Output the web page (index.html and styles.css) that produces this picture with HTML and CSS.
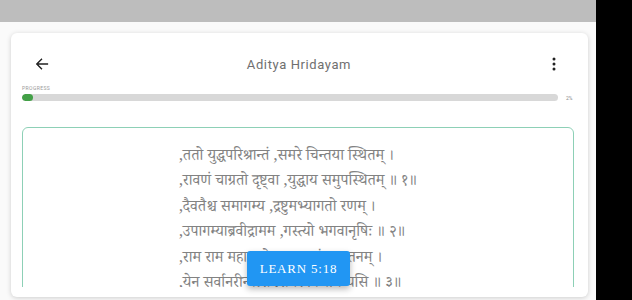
FILE: index.html
```html
<!DOCTYPE html>
<html lang="en">
<head>
    <meta charset="UTF-8">
    <meta name="viewport" content="width=device-width, initial-scale=1.0">
    <title>Aditya Hridayam</title>
    <link rel="stylesheet" href="styles.css">
</head>
<body>
    <div class="screen">
        <div class="main">
            <div class="topbar"></div>

            <div class="card">
                <div class="header">
                    <button class="icon-btn" aria-label="Back">
                        <svg width="14" height="14" viewBox="0 0 16 16">
                            <path d="M15 8H2M8 2L2 8l6 6" fill="none" stroke="#222" stroke-width="1.6"/>
                        </svg>
                    </button>
                    <div class="title">Aditya Hridayam</div>
                    <button class="icon-btn" aria-label="More">
                        <svg width="4" height="14" viewBox="0 0 4 14">
                            <circle cx="2" cy="2" r="1.5" fill="#222"/>
                            <circle cx="2" cy="7" r="1.5" fill="#222"/>
                            <circle cx="2" cy="12" r="1.5" fill="#222"/>
                        </svg>
                    </button>
                </div>

                <div class="progress-label">PROGRESS</div>
                <div class="progress-row">
                    <div class="progress-track">
                        <div class="progress-fill" style="width: 2%"></div>
                    </div>
                    <span class="progress-value">2%</span>
                </div>

                <div class="verse-scroll">
                    <div class="verse-box">
                        <div class="verses">
                            <p>,ततो युद्धपरिश्रान्तं ,समरे चिन्तया स्थितम् ।</p>
                            <p>,रावणं चाग्रतो दृष्ट्वा ,युद्धाय समुपस्थितम् ॥ १॥</p>
                            <p>,दैवतैश्च समागम्य ,द्रष्टुमभ्यागतो रणम् ।</p>
                            <p>,उपागम्याब्रवीद्रामम ,गस्त्यो भगवानृषिः ॥ २॥</p>
                            <p>,राम राम महाबाहो ,शृणु गुह्यं सनातनम् ।</p>
                            <p>,येन सर्वानरीन्वत्स ,समरे विजयिष्यसि ॥ ३॥</p>
                        </div>
                    </div>
                </div>

                <button class="learn-btn">LEARN 5:18</button>
            </div>
        </div>
        <div class="side"></div>
    </div>
</body>
</html>
```

FILE: styles.css
```css
body {
    margin: 0;
    padding: 0;
    font-family: Roboto, sans-serif;
    background-color: #000;
}
.screen {
    display: flex;
    height: 300px;
    overflow: hidden;
}
.main {
    width: 596px;
    background-color: #fafafa;
    display: flex;
    flex-direction: column;
}
.side {
    flex: 1;
    background-color: #000;
}
.topbar {
    height: 22px;
    background-color: #bdbdbd;
    flex-shrink: 0;
}
.card {
    position: relative;
    margin: 11px 8px 0 11px;
    height: 264px;
    background: white;
    border-radius: 6px;
    box-shadow: 0 1px 5px rgba(0, 0, 0, 0.18);
    padding: 11px 14px 0 11px;
    box-sizing: border-box;
    overflow: hidden;
}
.header {
    display: flex;
    align-items: center;
    justify-content: space-between;
    height: 40px;
    padding: 0 12px 0 12px;
}
.icon-btn {
    background: none;
    border: none;
    padding: 0;
    width: 16px;
    height: 16px;
    display: flex;
    align-items: center;
    justify-content: center;
}
.title {
    font-size: 13px;
    letter-spacing: 0.6px;
    color: #6f6f6f;
    margin-left: 2px;
}
.progress-label {
    font-size: 5px;
    letter-spacing: 0.4px;
    color: #9a9a9a;
    margin-top: 0;
    height: 8px;
    line-height: 8px;
}
.progress-row {
    display: flex;
    align-items: center;
    margin-top: 2px;
}
.progress-track {
    width: 536px;
    height: 7px;
    background-color: #d8d8d8;
    border-radius: 4px;
    overflow: hidden;
}
.progress-fill {
    height: 100%;
    background-color: #43a047;
    border-radius: 4px;
}
.progress-value {
    font-size: 5px;
    color: #8a8a8a;
    margin-left: 8px;
}
.verse-scroll {
    margin-top: 26px;
    height: 160px;
    overflow: hidden;
}
.verse-box {
    border: 1px solid #8dd0b6;
    border-radius: 6px;
    padding: 18px 0 20px;
    text-align: center;
}
.verses {
    display: inline-block;
    text-align: left;
    font-family: "Noto Serif Devanagari", "Noto Sans Devanagari", "Liberation Serif", serif;
    font-size: 15.5px;
    color: #828282;
    margin-left: 0;
}
.verses p {
    margin: 0;
    line-height: 25.4px;
}
.learn-btn {
    position: absolute;
    left: 236px;
    top: 218px;
    width: 103px;
    height: 35px;
    background-color: #2196f3;
    color: white;
    border: none;
    border-radius: 3px;
    font-family: "Liberation Serif", serif;
    font-size: 13px;
    letter-spacing: 0.8px;
    padding: 0;
    box-shadow: 0 3px 6px rgba(0, 0, 0, 0.28);
}
```
